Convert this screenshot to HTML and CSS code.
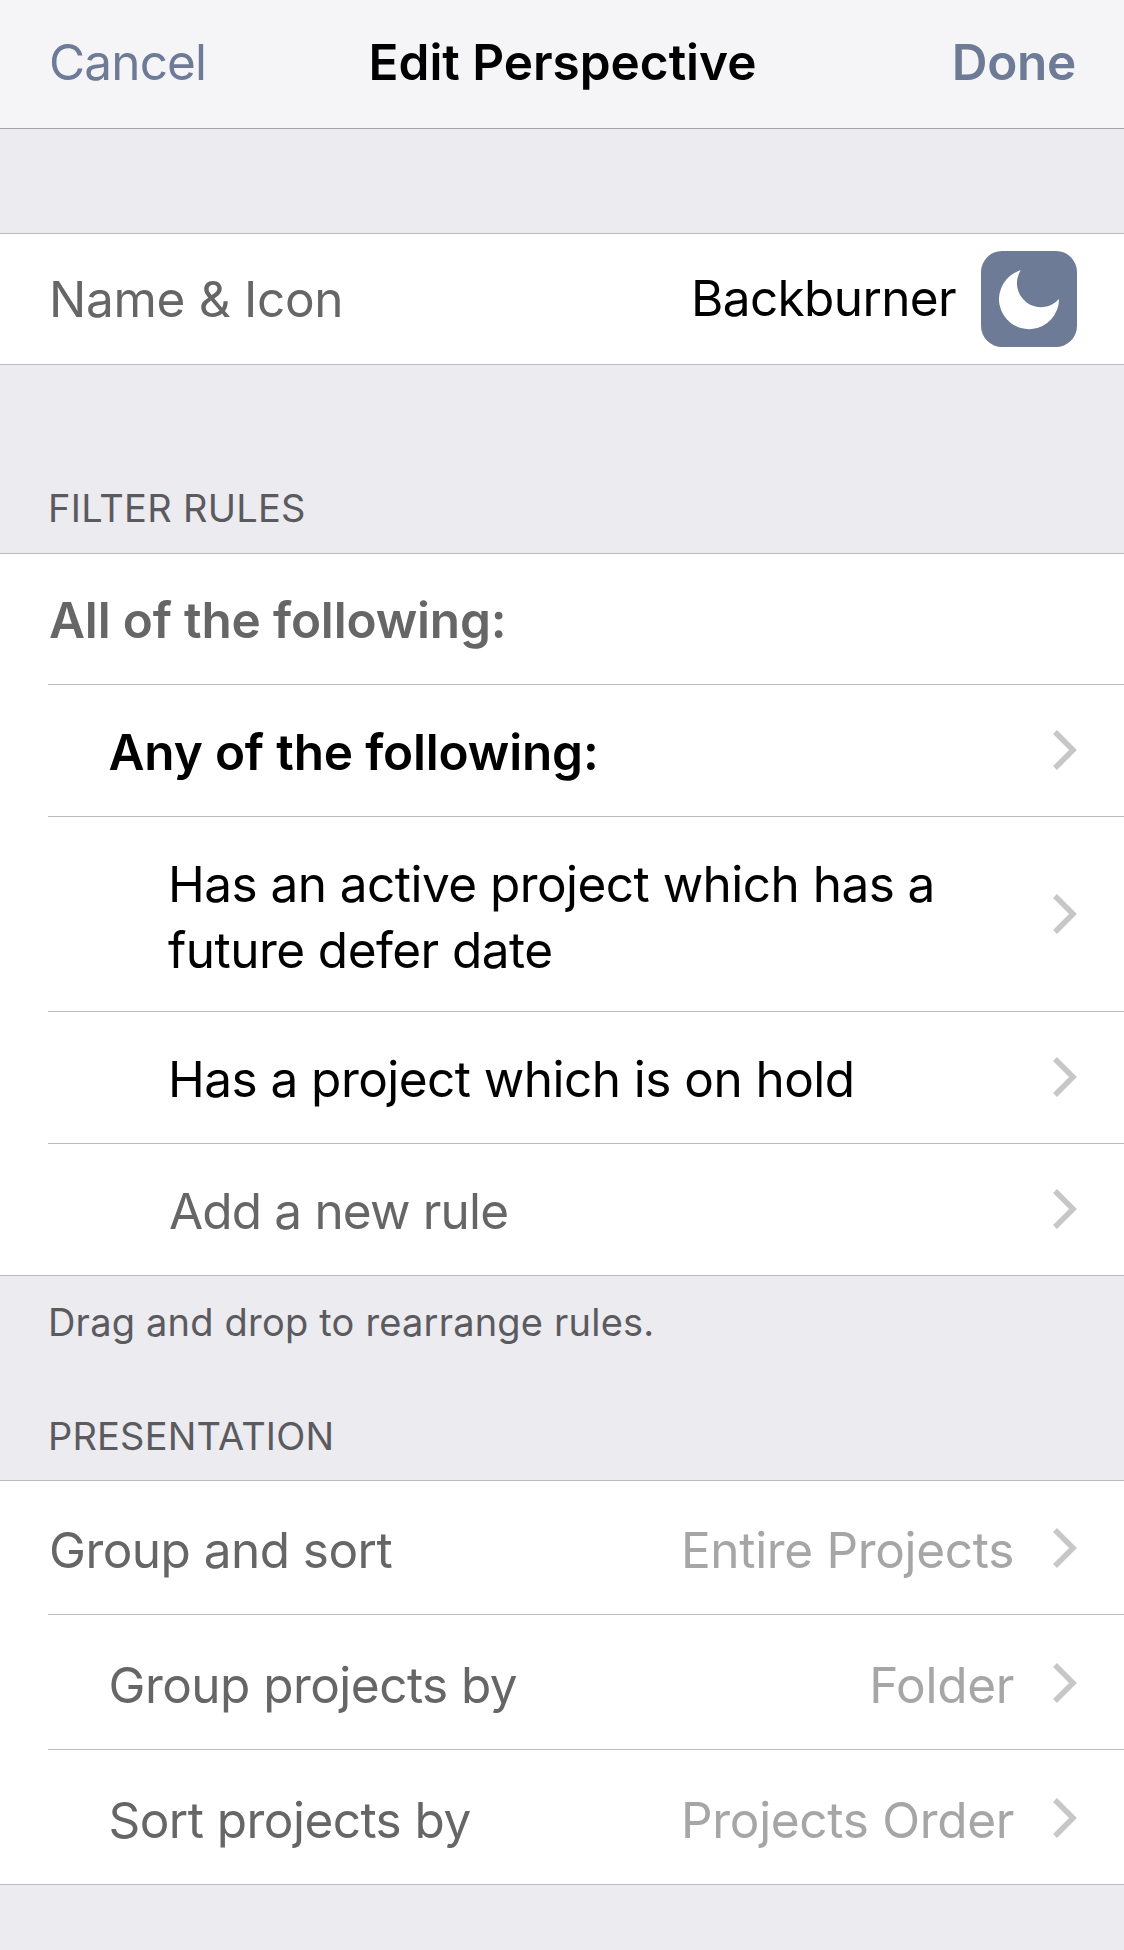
FILE: index.html
```html
<!DOCTYPE html>
<html lang="en">
<head>
  <meta charset="UTF-8" />
  <meta name="viewport" content="width=device-width, initial-scale=1.0" />
  <title>Edit Perspective</title>
  <link rel="stylesheet" href="styles.css">
</head>
<body>
  <!-- shared disclosure arrow -->
  <svg class="defs" width="0" height="0" aria-hidden="true">
    <symbol id="chevron" viewBox="0 0 24 40">
      <path d="M2 2L20 20L2 38" fill="none" stroke="#c7c7c7" stroke-width="5.6" />
    </symbol>
  </svg>

  <header class="navbar">
    <a class="nav-btn cancel">Cancel</a>
    <h1>Edit Perspective</h1>
    <a class="nav-btn done">Done</a>
  </header>

  <main>
    <section class="card name-card">
      <div class="row name-row">
        <span class="label name-label">Name &amp; Icon</span>
        <span class="name-value">Backburner</span>
        <svg class="app-icon" viewBox="0 0 96 96">
          <rect width="96" height="96" rx="21" fill="#6e7b97" />
          <path d="M39.7 19.3A30 30 0 1 0 78 48A24 24 0 0 1 39.7 19.3Z" fill="#fff" />
        </svg>
      </div>
    </section>

    <h2 class="section-title">FILTER RULES</h2>
    <section class="card rules">
      <div class="row first">
        <span class="label bold">All of the following:</span>
      </div>
      <div class="row">
        <span class="label bold dark indent-1">Any of the following:</span>
        <svg class="chevron"><use href="#chevron" /></svg>
      </div>
      <div class="row tall">
        <span class="label dark indent-2">Has an active project which has a future defer date</span>
        <svg class="chevron"><use href="#chevron" /></svg>
      </div>
      <div class="row">
        <span class="label dark indent-2">Has a project which is on hold</span>
        <svg class="chevron"><use href="#chevron" /></svg>
      </div>
      <div class="row">
        <span class="label indent-2 add-rule">Add a new rule</span>
        <svg class="chevron"><use href="#chevron" /></svg>
      </div>
    </section>
    <p class="footnote">Drag and drop to rearrange rules.</p>

    <h2 class="section-title presentation-title">PRESENTATION</h2>
    <section class="card presentation">
      <div class="row first">
        <span class="label">Group and sort</span>
        <span class="value">Entire Projects</span>
        <svg class="chevron"><use href="#chevron" /></svg>
      </div>
      <div class="row">
        <span class="label indent-1">Group projects by</span>
        <span class="value">Folder</span>
        <svg class="chevron"><use href="#chevron" /></svg>
      </div>
      <div class="row">
        <span class="label indent-1">Sort projects by</span>
        <span class="value">Projects Order</span>
        <svg class="chevron"><use href="#chevron" /></svg>
      </div>
    </section>
  </main>
</body>
</html>
```
FILE: styles.css
```css
* {
  box-sizing: border-box;
}

body {
  margin: 0;
  min-height: 1950px;
  background-color: #ebebf0;
  color: #000;
  font-family: Inter, "Liberation Sans", sans-serif;
  font-size: 49.5px;
  line-height: 66px;
  letter-spacing: -0.54px;
}

h1, h2, p {
  margin: 0;
}

.defs {
  display: block;
}

.navbar {
  display: grid;
  grid-template-columns: 1fr auto 1fr;
  height: 129px;
  padding: 29px 47px 0 48px;
  background-color: #f5f5f7;
  border-bottom: 1px solid #a3a3a8;
}

.navbar h1 {
  font-size: 49.5px;
  font-weight: 600;
  letter-spacing: -0.03px;
}

.nav-btn {
  color: #6e7b97;
}

.cancel {
  padding-left: 1px;
  letter-spacing: -0.85px;
}

.done {
  justify-self: end;
  padding-right: 1px;
  font-weight: 600;
  letter-spacing: -0.3px;
}

.card {
  padding-left: 48px;
  background-color: #fff;
  border-top: 1px solid #bbbac0;
  border-bottom: 1px solid #bbbac0;
}

.name-card {
  margin-top: 104px;
}

.row {
  display: flex;
  align-items: center;
  height: 132px;
  padding-right: 47px;
  border-top: 1px solid #bbbac0;
}

.row.first,
.name-row {
  height: 130px;
  border-top: none;
}

.row.tall {
  height: 195px;
}

.label {
  flex: 1;
  padding: 3px 0 0 1px;
  color: #666;
}

.rules .first .label {
  padding-top: 1px;
}

.tall .label {
  padding: 6px 60px 0 0;
}

.bold {
  font-weight: 600;
  letter-spacing: -0.17px;
}

.dark {
  color: #000;
}

.label.indent-1 {
  padding-left: 60.5px;
}

.label.indent-2 {
  padding-left: 120px;
}

.label.add-rule {
  padding-left: 121px;
  letter-spacing: -0.83px;
}

.name-label {
  padding-top: 0;
  letter-spacing: -0.3px;
}

.name-value {
  margin-top: -2px;
  margin-right: 25px;
  letter-spacing: -0.64px;
}

.app-icon {
  width: 96px;
  height: 96px;
}

.chevron {
  flex: none;
  width: 24px;
  height: 40px;
}

.rules .row:not(.tall) .chevron {
  margin-bottom: 2px;
}

.section-title,
.footnote {
  padding-left: 48px;
  color: #5b5a5f;
  font-size: 38px;
  font-weight: 400;
  line-height: 46px;
  letter-spacing: 0.28px;
}

.section-title {
  padding-top: 120px;
  padding-bottom: 22px;
}

.footnote {
  padding-top: 23px;
  letter-spacing: 0.2px;
}

.presentation-title {
  padding-top: 68px;
  padding-bottom: 21px;
  letter-spacing: 0.18px;
}

.presentation .row {
  height: 135px;
}

.presentation .row.first {
  height: 133px;
}

.presentation .chevron {
  margin-top: 1px;
}

.presentation .label,
.value {
  padding-top: 5px;
}

.value {
  margin-right: 39px;
  color: #a6a6a6;
  letter-spacing: -0.32px;
}
```
